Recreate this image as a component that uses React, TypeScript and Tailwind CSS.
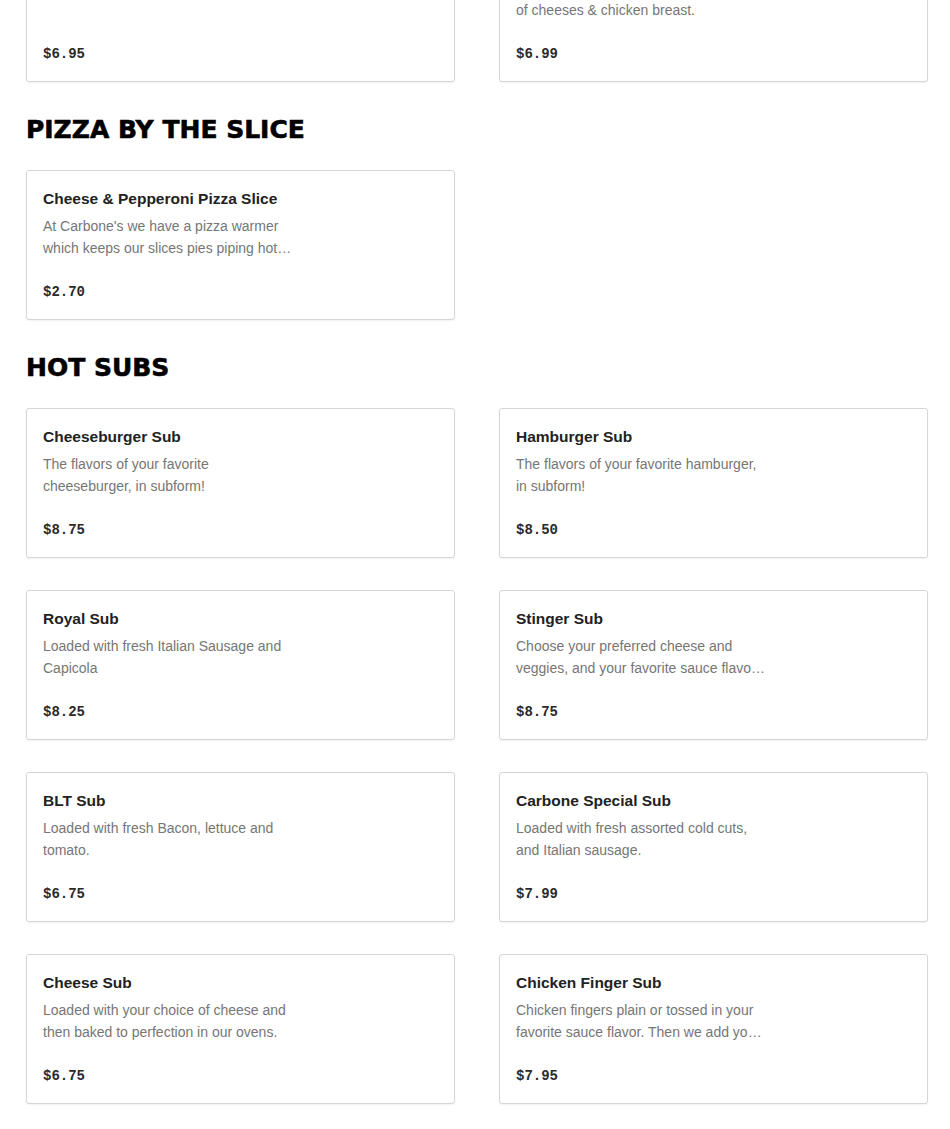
import React from "react";

interface Item {
  name: string;
  description: string;
  price: string;
}

interface Section {
  title?: string;
  items: Item[];
}

const sections: Section[] = [
  {
    items: [
      { name: "Garlic Knots", description: "Fresh baked knots with garlic butter.", price: "$6.95" },
      {
        name: "Chicken Parm Sub",
        description: "Breaded chicken with marinara, a blend of cheeses & chicken breast.",
        price: "$6.99",
      },
    ],
  },
  {
    title: "PIZZA BY THE SLICE",
    items: [
      {
        name: "Cheese & Pepperoni Pizza Slice",
        description:
          "At Carbone's we have a pizza warmer which keeps our slices pies piping hot and ready to go.",
        price: "$2.70",
      },
    ],
  },
  {
    title: "HOT SUBS",
    items: [
      { name: "Cheeseburger Sub", description: "The flavors of your favorite cheeseburger, in subform!", price: "$8.75" },
      { name: "Hamburger Sub", description: "The flavors of your favorite hamburger, in subform!", price: "$8.50" },
      { name: "Royal Sub", description: "Loaded with fresh Italian Sausage and Capicola", price: "$8.25" },
      {
        name: "Stinger Sub",
        description: "Choose your preferred cheese and veggies, and your favorite sauce flavor to top it off.",
        price: "$8.75",
      },
      { name: "BLT Sub", description: "Loaded with fresh Bacon, lettuce and tomato.", price: "$6.75" },
      {
        name: "Carbone Special Sub",
        description: "Loaded with fresh assorted cold cuts, and Italian sausage.",
        price: "$7.99",
      },
      {
        name: "Cheese Sub",
        description: "Loaded with your choice of cheese and then baked to perfection in our ovens.",
        price: "$6.75",
      },
      {
        name: "Chicken Finger Sub",
        description: "Chicken fingers plain or tossed in your favorite sauce flavor. Then we add your toppings.",
        price: "$7.95",
      },
    ],
  },
];

function MenuCard({ name, description, price }: Item) {
  return (
    <div className="h-[150px] rounded-[3px] border border-[#d6d6d6] bg-white px-4 pt-4 shadow-[0_1px_2px_rgba(0,0,0,0.06)]">
      <h3 className="text-[15.5px] font-semibold leading-6 text-[#222]">{name}</h3>
      <p className="mt-1 h-[44px] max-w-[250px] text-[14px] leading-[22px] text-[#767676] line-clamp-2">
        {description}
      </p>
      <p className="mt-[23px] font-['Liberation_Mono',monospace] text-[14px] font-bold leading-5 text-[#2a2a2a]">
        {price}
      </p>
    </div>
  );
}

export default function App() {
  return (
    <div className="min-h-screen overflow-hidden bg-white font-['Liberation_Sans',Arial,sans-serif]">
      <div className="-mt-[68px] pl-[26px] pr-[22px]">
        {sections.map((section, i) => (
          <section key={i} className={i > 0 ? "mt-8" : ""}>
            {section.title && (
              <h2 className="mb-6 font-['DejaVu_Sans',sans-serif] text-[25px] font-black leading-8 text-black [-webkit-text-stroke:0.6px_black]">
                {section.title}
              </h2>
            )}
            <div className="grid grid-cols-2 gap-x-[44px] gap-y-8">
              {section.items.map((item) => (
                <MenuCard key={item.name} {...item} />
              ))}
            </div>
          </section>
        ))}
      </div>
    </div>
  );
}
